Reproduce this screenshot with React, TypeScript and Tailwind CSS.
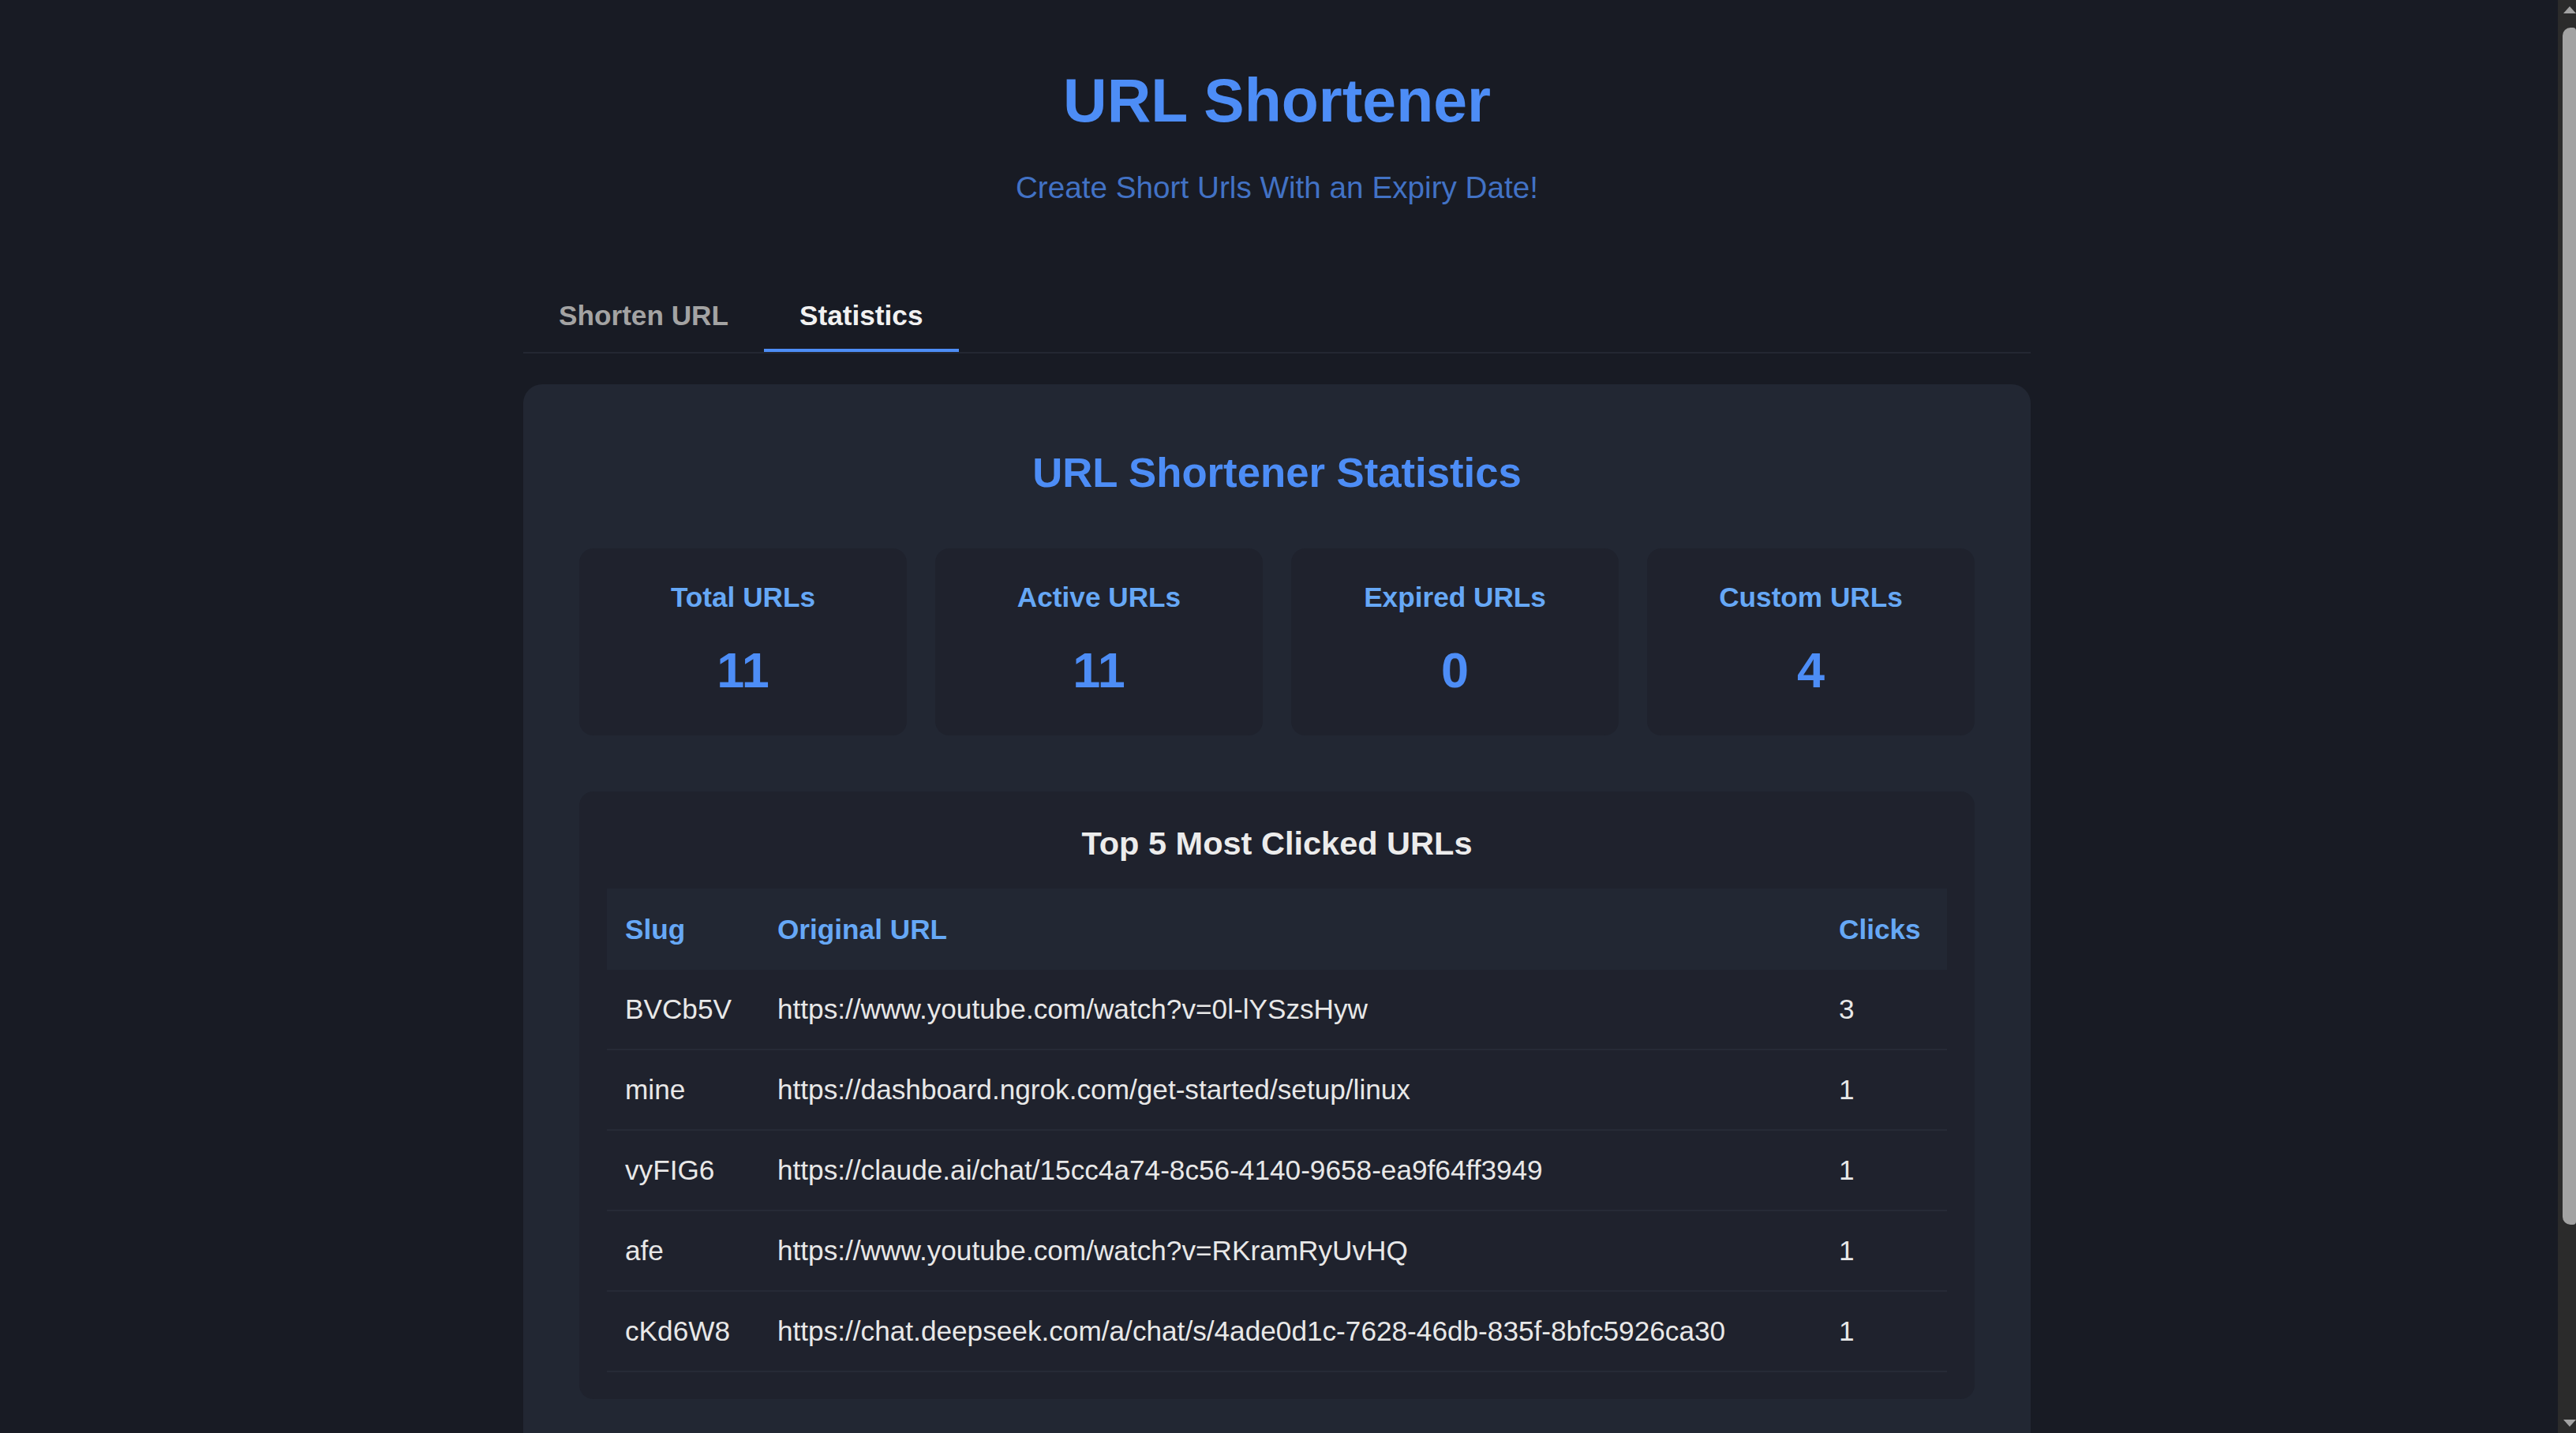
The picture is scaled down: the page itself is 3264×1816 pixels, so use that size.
export default function App() {
  const stats = [
    { label: "Total URLs", value: 11 },
    { label: "Active URLs", value: 11 },
    { label: "Expired URLs", value: 0 },
    { label: "Custom URLs", value: 4 },
  ];
  const rows = [
    ["BVCb5V", "https://www.youtube.com/watch?v=0l-lYSzsHyw", "3"],
    ["mine", "https://dashboard.ngrok.com/get-started/setup/linux", "1"],
    ["vyFIG6", "https://claude.ai/chat/15cc4a74-8c56-4140-9658-ea9f64ff3949", "1"],
    ["afe", "https://www.youtube.com/watch?v=RKramRyUvHQ", "1"],
    ["cKd6W8", "https://chat.deepseek.com/a/chat/s/4ade0d1c-7628-46db-835f-8bfc5926ca30", "1"],
  ];
  return (
    <div className="flex h-[1816px] overflow-hidden bg-[#181b24] font-['Liberation_Sans',Arial,sans-serif]">
      <div className="min-w-0 flex-1 overflow-hidden pr-[5px]">
        <div className="mx-auto w-[1910px] pt-[82px] pb-[269px]">
          <h1 className="text-center text-[77px] leading-[91px] font-bold text-[#4d8df6]">URL Shortener</h1>
          <p className="mt-[43px] text-center text-[38.7px] leading-[44px] text-[#4272c5]">
            Create Short Urls With an Expiry Date!
          </p>

          <div className="mt-[98px] flex border-b-2 border-[#232732]">
            <button className="border-b-4 border-transparent px-[45px] pt-[22px] pb-[22px] text-[35.2px] leading-[40px] font-bold text-[#a3a3a3]">
              Shorten URL
            </button>
            <button className="border-b-4 border-[#4d8df6] px-[45px] pt-[22px] pb-[22px] text-[35.2px] leading-[40px] font-bold text-[#f1f1f1]">
              Statistics
            </button>
          </div>

          <div className="mt-[39px] rounded-[24px] bg-[#222733] px-[71px] pt-[82px] pb-[71px]">
            <h2 className="text-center text-[52.7px] leading-[60px] font-bold text-[#4d8df6]">URL Shortener Statistics</h2>

            <div className="mt-[66px] grid grid-cols-4 gap-[36px]">
              {stats.map((s) => (
                <div key={s.label} className="flex h-[237px] flex-col items-center rounded-[18px] bg-[#1f222d] pt-[42px]">
                  <div className="text-[35.2px] leading-[40px] font-bold text-[#66a8f6]">{s.label}</div>
                  <div className="mt-[37px] text-[63px] leading-[71px] font-bold text-[#4d8df6]">{s.value}</div>
                </div>
              ))}
            </div>

            <div className="mt-[71px] rounded-[18px] bg-[#1f222d] px-[35px] pt-[42px] pb-[34px]">
              <h3 className="text-center text-[41.5px] leading-[48px] font-bold text-[#ececec]">Top 5 Most Clicked URLs</h3>
              <div className="mt-[33px]">
                <div className="grid h-[103px] grid-cols-[193px_1fr_160px] items-center bg-[#222733] text-[35.2px] leading-[40px] font-bold text-[#66a8f6]">
                  <div className="pl-[23px]">Slug</div>
                  <div className="pl-[23px]">Original URL</div>
                  <div className="pl-[23px]">Clicks</div>
                </div>
                {rows.map((r) => (
                  <div
                    key={r[0]}
                    className="grid h-[102px] grid-cols-[193px_1fr_160px] items-center border-b-2 border-[#262a36] text-[35.2px] leading-[40px] text-[#e8e8e8]"
                  >
                    <div className="pl-[23px]">{r[0]}</div>
                    <div className="whitespace-nowrap pl-[23px]">{r[1]}</div>
                    <div className="pl-[23px]">{r[2]}</div>
                  </div>
                ))}
              </div>
            </div>
          </div>
        </div>
      </div>

      <div className="flex w-[23px] shrink-0 flex-col bg-[#2b2b2b]">
        <div className="flex h-[35px] items-start pt-[7px] pl-[7px]">
          <svg width="16" height="10" viewBox="0 0 16 10">
            <polygon points="0,10 8,1 16,10" fill="#a3a3a3" />
          </svg>
        </div>
        <div className="ml-[6px] h-[1517px] rounded-l-[10px] rounded-r-[4px] bg-[#a3a3a3]" />
        <div className="flex flex-1 items-end pb-[7px] pl-[7px]">
          <svg width="16" height="10" viewBox="0 0 16 10">
            <polygon points="0,0 8,9 16,0" fill="#a3a3a3" />
          </svg>
        </div>
      </div>
    </div>
  );
}
